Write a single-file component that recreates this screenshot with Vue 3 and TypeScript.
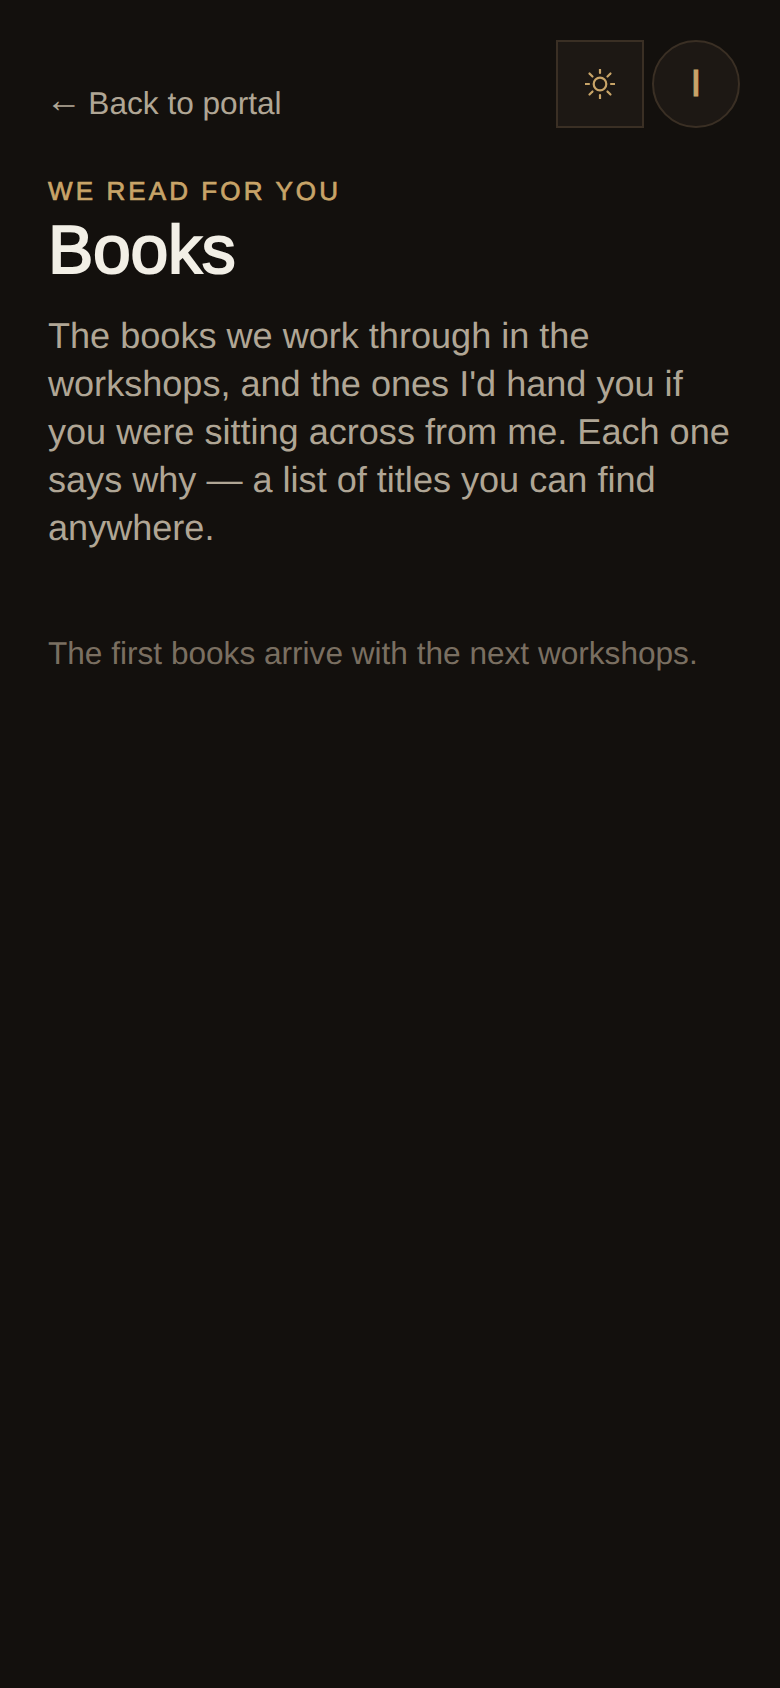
<script setup lang="ts">
const rays = [
  [15, 0.5, 15, 4], [15, 26, 15, 29.5], [0.5, 15, 4, 15], [26, 15, 29.5, 15],
  [4.5, 4.5, 7.5, 7.5], [22.5, 22.5, 25.5, 25.5], [4.5, 25.5, 7.5, 22.5], [22.5, 7.5, 25.5, 4.5],
]
</script>

<template>
  <main class="page">
    <div class="controls">
      <button class="btn square" aria-label="Toggle theme">
        <svg class="sun" width="30" height="30" viewBox="0 0 30 30" fill="none" stroke="#c8a468" stroke-width="2.2" stroke-linecap="round">
          <circle cx="15" cy="15" r="6.3" />
          <line v-for="(r, i) in rays" :key="i" :x1="r[0]" :y1="r[1]" :x2="r[2]" :y2="r[3]" />
        </svg>
      </button>
      <button class="btn round">I</button>
    </div>
    <a class="back"><span class="arrow">←</span> Back to portal</a>
    <p class="eyebrow">WE READ FOR YOU</p>
    <h1 class="title">Books</h1>
    <p class="lead">The books we work through in the workshops, and the ones I'd hand you if you were sitting across from me. Each one says why — a list of titles you can find anywhere.</p>
    <p class="note">The first books arrive with the next workshops.</p>
  </main>
</template>

<style>
html, body { margin: 0; background: #13100d; }
</style>

<style scoped>
.page {
  position: relative;
  box-sizing: border-box;
  min-height: 1688px;
  padding: 79px 40px 0 48px;
  background: #13100d;
  font-family: "Liberation Sans", Arial, sans-serif;
  text-rendering: geometricPrecision;
}
.controls {
  position: absolute;
  top: 40px;
  right: 40px;
  display: flex;
  gap: 8px;
}
.btn {
  box-sizing: border-box;
  width: 88px;
  height: 88px;
  display: flex;
  align-items: center;
  justify-content: center;
  padding: 0;
  background: #1d1814;
  border: 2px solid #3a2f24;
  color: #c8a468;
  font-family: inherit;
}
.round {
  border-radius: 50%;
  font-size: 37px;
  -webkit-text-stroke: 1.2px #c8a468;
}
.back {
  display: block;
  font-size: 31.6px;
  line-height: 48px;
  color: #b0a695;
}
.arrow {
  display: inline-block;
  font-family: "Liberation Serif", serif;
  line-height: 1;
  vertical-align: 2px;
  transform: scale(1.155);
  transform-origin: 50% 84%;
}
.eyebrow {
  margin: 44px 0 0;
  font-size: 26px;
  line-height: 40px;
  letter-spacing: 3.1px;
  color: #c8a468;
  -webkit-text-stroke: 0.7px #c8a468;
}
.title {
  margin: 1px 0 0;
  font-size: 68px;
  line-height: 76px;
  font-weight: 400;
  letter-spacing: -0.3px;
  color: #f2efe6;
  -webkit-text-stroke: 1.9px #f2efe6;
}
.lead {
  margin: 24px 0 0;
  font-size: 36.1px;
  line-height: 48px;
  color: #b0a695;
}
.note {
  margin: 77px 0 0;
  font-size: 31.6px;
  line-height: 48px;
  color: #7a6f61;
}
</style>
